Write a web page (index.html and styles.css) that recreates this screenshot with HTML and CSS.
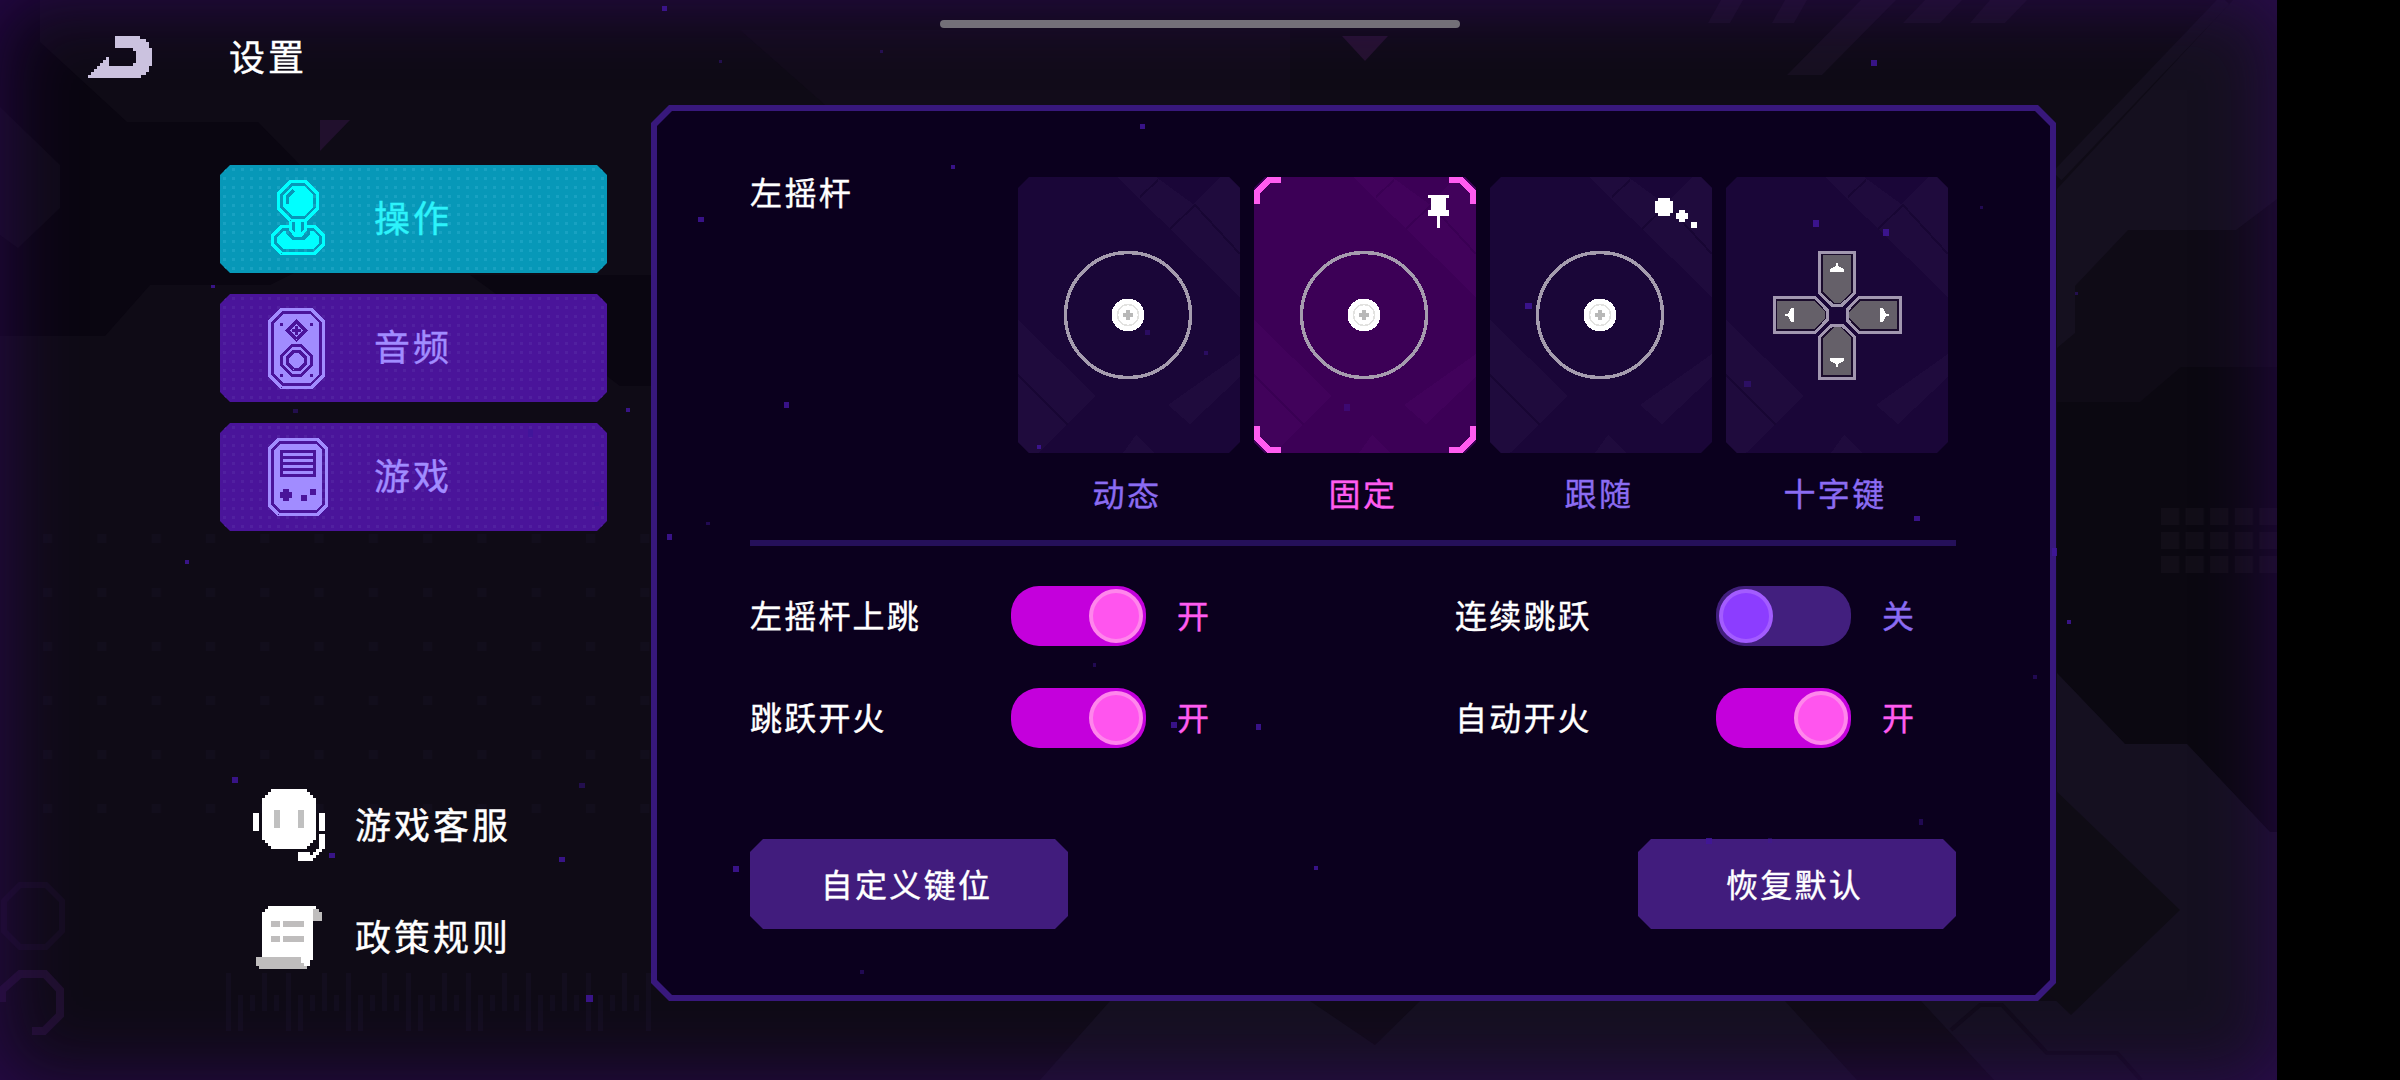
FILE: index.html
```html
<!DOCTYPE html>
<html lang="zh-CN">
<head>
    <meta charset="UTF-8">
    <meta name="viewport" content="width=device-width, initial-scale=1.0">
    <title>设置</title>
    <link rel="stylesheet" href="styles.css">
</head>
<body>
    <div class="screen">
        <!-- Background shapes -->
        <svg class="backdrop" viewBox="0 0 2277 1080">
            <defs>
                <pattern id="dots" x="43" y="534" width="54.3" height="54" patternUnits="userSpaceOnUse">
                    <rect width="9" height="9" fill="#120e1c"/>
                </pattern>
                <pattern id="bars" x="226" y="973" width="60" height="58" patternUnits="userSpaceOnUse">
                    <path d="M0 0h5v58h-5zM12 22h5v36h-5zM24 22h5v16h-5zM36 0h5v38h-5zM48 22h5v16h-5z" fill="#130e1e"/>
                </pattern>
                <pattern id="blocks" x="2161" y="508" width="24.6" height="24" patternUnits="userSpaceOnUse">
                    <rect width="18" height="17" fill="#120e18"/>
                </pattern>
            </defs>
            <path d="M0 0H40V42L127 122H258L300 165V270L270 285H150L105 336H0z" fill="#0a0611"/>
            <path d="M0 107L60 165V208L18 248L0 235z" fill="#0f0b17"/>
            <path d="M470 275H660V386H620L560 340z" fill="#0a0611"/>
            <path d="M320 120H350L320 151z" fill="#21102d"/>
            <path d="M740 30H1290V105H825z" fill="#120c1a"/>
            <path d="M1342 36H1388L1365 61z" fill="#25122f"/>
            <rect x="43" y="534" width="610" height="282" fill="url(#dots)"/>
            <rect x="226" y="973" width="425" height="58" fill="url(#bars)"/>
            <path d="M20 885H46L62 901V931L46 947H20L4 931V901z" fill="none" stroke="#150d20" stroke-width="6"/>
            <path d="M2 1002V990L20 974H45L60 990V1015L44 1031H32" fill="none" stroke="#1f102d" stroke-width="8"/>
            <path d="M1721 0H1743L1730 23H1708zM1785 0H1807L1794 23H1772zM1861 0H1896L1822 75H1787zM1925 0H1962L1940 23H1903zM1990 0H2027L2005 23H1970z" fill="#171020"/>
            <path d="M2233 0H2277V199L2236 230H2128L2075 286V333L2057 348V189z" fill="#15101f"/>
            <path d="M2225 0L2057 176" stroke="#15101f" stroke-width="12"/>
            <path d="M2057 402H2140L2181 367H2277V832H2270L2187 744H2125L2057 673z" fill="#0b0811"/>
            <rect x="2161" y="508" width="116" height="66" fill="url(#blocks)"/>
            <path d="M2057 673L2125 744H2187L2270 832H2277V1080H1040L1110 1001H2057z" fill="#151020"/>
            <path d="M2050 785L2180 910L2071 1015L2050 995z" fill="#0f0c15"/>
            <path d="M1310 1001H1420L1375 1045zM1785 1001H1921L1994 1080H1857z" fill="#100b17"/>
            <path d="M1951 1030L1980 1005H2002L2047 1053H2117L2141 1080" fill="none" stroke="#110b1a" stroke-width="4"/>
        </svg>
        <div class="glow"></div>

        <header class="topbar">
            <svg class="back" width="64" height="42" viewBox="88 36 64 42">
                <path d="M115 36H140V39H146V42H149V48H152V66H149V72H146V75H141V78H88V75H91V72H94V69H97V66H100V63H103V60H106V57H109V66H133V63H136V51H133V48H115z" fill="#cbc2df"/>
            </svg>
            <h1>设置</h1>
        </header>
        <div class="drag-bar"></div>

        <main class="content">
            <aside class="sidebar">
                <nav class="tabs">
                    <a class="tab active">
                        <!-- joystick -->
                        <svg class="tab-icon" width="60" height="78" viewBox="-1 0 20 26">
                            <g fill="none" stroke="currentColor">
                                <path d="M6.500.5H11.500L15.500 4.500V9.500L11.500 13.500H6.500L2.500 9.500V4.500z"/>
                                <path d="M6.500 13.500V16.500L8 18.500H10L11.500 16.500V13.500M6.500 15.500H3.500L.5 18.500V21.500L3.500 24.500H14.500L17.500 21.500V18.500L14.500 15.500H11.500"/>
                            </g>
                            <path d="M7 2H11L14 5V9L11 12H7L4 9V5z" fill="currentColor"/>
                            <path d="M2 19L4 17H5V18L7 20H11L13 18V17H14L16 19V21L14 23H4L2 21zM8 13H10V18H8z" fill="currentColor"/>
                            <path d="M5.500 8V5.500L7.500 3.500" fill="none" stroke="#0798b8"/>
                        </svg>
                        <span>操作</span>
                    </a>
                    <a class="tab">
                        <!-- speaker -->
                        <svg class="tab-icon" width="60" height="81" viewBox="0 0 20 27">
                            <path d="M4.500.5H14.500L18.500 4.500V22.500L14.500 26.500H4.500L.5 22.500V4.500z" fill="none" stroke="currentColor"/>
                            <path d="M5 2H14L17 5V22L14 25H5L2 22V5z" fill="currentColor"/>
                            <g fill="none" stroke="#4a149a">
                                <path d="M9.500 4.500L12.500 7.500L9.500 10.500L6.500 7.500z"/>
                                <path d="M8 7.500H11M9.500 6V9"/>
                                <path d="M8 12.500H11L14.500 16V19L11 22.500H8L4.500 19V16z"/>
                                <path d="M8.500 14.500H10.500L12.500 16.500V18.500L10.500 20.500H8.500L6.500 18.500V16.500z"/>
                            </g>
                            <path d="M4 5h1v1h-1zM14 5h1v1h-1zM4 22h1v1h-1zM14 22h1v1h-1z" fill="#4a149a"/>
                        </svg>
                        <span>音频</span>
                    </a>
                    <a class="tab">
                        <!-- handheld console -->
                        <svg class="tab-icon" width="60" height="78" viewBox="0 0 20 26">
                            <path d="M3.500.5H16.500L19.500 3.500V22.500L16.500 25.500H3.500L.5 22.500V3.500z" fill="none" stroke="currentColor"/>
                            <path d="M4 2H16L18 4V22L16 24H4L2 22V4z" fill="currentColor"/>
                            <path d="M4 4H16V13H4zM5 17H7V18H8V20H7V21H5V20H4V18H5zM11 19h2v2h-2zM14 17h2v2h-2z" fill="#4a149a"/>
                            <path d="M5 5h10v1H5zM5 7h10v1H5zM5 9h10v1H5zM5 11h10v1H5z" fill="currentColor"/>
                        </svg>
                        <span>游戏</span>
                    </a>
                </nav>

                <div class="links">
                    <a class="link">
                        <svg width="72" height="72" viewBox="0 0 24 24">
                            <path d="M6 0H18V1H19V2H20V3H21V17H20V18H19V19H18V20H6V19H5V18H4V17H3V3H4V2H5V1H6z" fill="#fff"/>
                            <path d="M0 8h2v6H0zM22 8h2v6h-2zM22 15H24V20H23V21H22V22H21V23H20V24H15V21H19V22H20V21H21V20H22z" fill="#fff"/>
                            <path d="M7 7h2v6H7zM15 7h2v6h-2z" fill="#c0c0c0"/>
                        </svg>
                        <span>游戏客服</span>
                    </a>
                    <a class="link">
                        <svg width="72" height="63" viewBox="-1 0 24 21">
                            <path d="M4 0H20V1H21V5H19V18H18V20H16V19H15V17H2V2H3V1H4z" fill="#fff"/>
                            <path d="M19 1H21V2H22V5H19zM0 17H15V19H16V20H17V21H1V20H0zM5 5h3v2H5zM9 5h7v2H9zM5 10h3v2H5zM9 10h7v2H9z" fill="#bfbdbd"/>
                        </svg>
                        <span>政策规则</span>
                    </a>
                </div>
            </aside>

            <section class="panel">
                <div class="panel-inner">
                    <div class="stick">
                        <h2>左摇杆</h2>
                        <div class="cards">
                            <div class="option">
                                <div class="card">
                                    <svg viewBox="0 0 222 276">
                                        <defs>
                                            <g id="deco">
                                                <path class="deco-fill" d="M99 0H138L175 27L202 0H222V120zM0 143L78 219L20 276H0zM222 177L150 228L172 247L222 200zM105 276L118 258L136 276z"/>
                                                <path class="deco-line" d="M122 20L140 3M152 52L177 28L222 77M0 198L50 248"/>
                                            </g>
                                            <g id="pad">
                                                <circle cx="110" cy="138" r="62.500" fill="none" stroke="#a59cae" stroke-width="3.500"/>
                                                <circle cx="110" cy="138" r="16.500" fill="#fff"/>
                                                <circle cx="110" cy="138" r="10.500" fill="none" stroke="#e2e2e0" stroke-width="1.500"/>
                                                <path d="M108 133h4v3h3v4h-3v3h-4v-3h-3v-4h3z" fill="#b8b8b8"/>
                                            </g>
                                        </defs>
                                        <use href="#deco"/>
                                        <use href="#pad"/>
                                    </svg>
                                </div>
                                <span>动态</span>
                            </div>
                            <div class="option selected">
                                <div class="card">
                                    <svg viewBox="0 0 222 276">
                                        <use href="#deco"/>
                                        <use href="#pad"/>
                                        <path d="M3 27V15L15 3H27M195 3H207L219 15V27M219 249V261L207 273H195M27 273H15L3 261V249" fill="none" stroke="#ff5cf0" stroke-width="6"/>
                                        <path d="M174 18H195V21H192V33H195V39H186V51H183V39H174V33H177V21H174z" fill="#fff"/>
                                    </svg>
                                </div>
                                <span>固定</span>
                            </div>
                            <div class="option">
                                <div class="card">
                                    <svg viewBox="0 0 222 276">
                                        <use href="#deco"/>
                                        <use href="#pad"/>
                                        <path d="M168 21H180V24H183V36H180V39H168V36H165V24H168zM189 33H195V36H198V42H195V45H189V42H186V36H189zM201 45h6v6h-6z" fill="#fff"/>
                                    </svg>
                                </div>
                                <span>跟随</span>
                            </div>
                            <div class="option">
                                <div class="card">
                                    <svg viewBox="0 0 222 276">
                                        <defs>
                                            <g id="arm">
                                                <path d="M-17.500-63H17.500V-22L5-10H-5L-17.500-22z" fill="#1a0b2c" stroke="#a297b0" stroke-width="3"/>
                                                <path d="M-14-60H14V-23L3-12H-3L-14-23z" fill="#656069"/>
                                                <path d="M-1-52H1V-49L7-46V-43H-7V-46L-1-49z" fill="#fff"/>
                                            </g>
                                        </defs>
                                        <use href="#deco"/>
                                        <g transform="translate(111 138)">
                                            <use href="#arm"/>
                                            <use href="#arm" transform="rotate(90)"/>
                                            <use href="#arm" transform="rotate(180)"/>
                                            <use href="#arm" transform="rotate(270)"/>
                                        </g>
                                    </svg>
                                </div>
                                <span>十字键</span>
                            </div>
                        </div>
                    </div>

                    <div class="switches">
                        <div class="row">
                            <label>左摇杆上跳</label>
                            <div class="switch on"><i></i></div>
                            <span class="state on">开</span>
                        </div>
                        <div class="row">
                            <label>连续跳跃</label>
                            <div class="switch"><i></i></div>
                            <span class="state">关</span>
                        </div>
                        <div class="row">
                            <label>跳跃开火</label>
                            <div class="switch on"><i></i></div>
                            <span class="state on">开</span>
                        </div>
                        <div class="row">
                            <label>自动开火</label>
                            <div class="switch on"><i></i></div>
                            <span class="state on">开</span>
                        </div>
                    </div>

                    <div class="actions">
                        <button type="button">自定义键位</button>
                        <button type="button">恢复默认</button>
                    </div>
                </div>
            </section>
        </main>

        <!-- Floating sparks -->
        <svg class="sparks" viewBox="0 0 2277 1080">
            <path d="M211 285h4v3h-4zM626 408h4v4h-4zM528 429h5v8h-5zM185 560h4v4h-4zM232 777h6v6h-6zM329 853h6v5h-6zM559 857h6v5h-6zM586 995h7v7h-7zM667 534h5v6h-5zM698 217h6v5h-6zM784 402h5v6h-5zM951 165h4v4h-4zM1037 445h4v4h-4zM1525 303h7v6h-7zM1813 220h6v7h-6zM1883 229h6v7h-6zM1914 516h6v5h-6zM1871 60h6v6h-6zM1140 124h5v5h-5zM1171 722h6v6h-6zM1256 724h5v6h-5zM733 866h6v6h-6zM1706 838h6v6h-6zM1314 866h4v4h-4zM2067 620h4v4h-4zM2052 548h5v8h-5zM662 6h5v5h-5z"/>
            <path class="faint" d="M293 409h5v4h-5zM594 502h5v4h-5zM579 783h6v5h-6zM1204 351h4v4h-4zM1744 381h7v6h-7zM1567 615h5v5h-5zM1093 663h3v4h-3zM1768 838h4v5h-4zM1919 819h4v6h-4zM860 970h4v4h-4zM2033 675h4v4h-4zM1980 206h3v3h-3zM2075 292h3v3h-3zM1344 404h6v7h-6zM1145 330h5v5h-5zM706 522h4v3h-4zM719 60h3v3h-3zM880 50h3v3h-3z"/>
        </svg>
    </div>
</body>
</html>
```
FILE: styles.css
```css
/* Reset */
body, h1, h2, button {
    margin: 0;
    padding: 0;
    box-sizing: border-box;
    font-family: "Noto Sans CJK SC", "Noto Sans", sans-serif;
    font-weight: 400;
}

body {
    width: 2400px;
    height: 1080px;
    overflow: hidden;
    background: #000;
    color: #fff;
    line-height: 1;
    -webkit-text-stroke: 0.4px currentColor;
}

svg {
    display: block;
    flex: none;
    shape-rendering: crispEdges;
}

.screen {
    position: relative;
    width: 2277px;
    height: 1080px;
    background: #0f0b16;
    overflow: hidden;
}

.backdrop, .glow, .sparks {
    position: absolute;
    left: 0;
    top: 0;
    width: 2277px;
    height: 1080px;
    pointer-events: none;
}

.backdrop {
    shape-rendering: auto;
}

.glow {
    box-shadow: inset 0 0 76px rgba(58, 8, 112, 0.62);
}

.sparks {
    fill: #40169a;
    opacity: 0.85;
}

.sparks .faint {
    opacity: 0.5;
}

/* Header */
.topbar {
    position: relative;
    display: flex;
    align-items: flex-start;
    gap: 77px;
    height: 105px;
    padding: 36px 0 0 88px;
    box-sizing: border-box;
}

.topbar h1 {
    padding-top: 1px;
    font-size: 36px;
    line-height: 36px;
    letter-spacing: 3px;
}

.drag-bar {
    position: absolute;
    left: 940px;
    top: 20px;
    width: 520px;
    height: 8px;
    border-radius: 4px;
    background: #737078;
}

.content {
    position: relative;
    display: flex;
    height: 975px;
}

/* Sidebar */
.sidebar {
    width: 651px;
    padding: 60px 44px 0 220px;
    box-sizing: border-box;
}

.tabs {
    display: flex;
    flex-direction: column;
    gap: 21px;
}

.tab {
    display: flex;
    align-items: center;
    gap: 46px;
    height: 108px;
    padding-left: 48px;
    background-color: #4a149a;
    background-image: radial-gradient(circle, #5120a0 1.5px, transparent 2px);
    background-size: 9px 9px;
    color: #a18cff;
    font-size: 36px;
    letter-spacing: 3px;
    clip-path: polygon(10px 0, calc(100% - 10px) 0, 100% 10px, 100% calc(100% - 10px), calc(100% - 10px) 100%, 10px 100%, 0 calc(100% - 10px), 0 10px);
}

.tab.active {
    background-color: #0798b8;
    background-image: radial-gradient(circle, #18a2c2 1.5px, transparent 2px);
    color: #00ffff;
}

.tab span {
    padding-bottom: 7px;
}

.tab.active span {
    color: #2cf3fb;
}

.links {
    display: flex;
    flex-direction: column;
    gap: 45px;
    padding: 258px 0 0 33px;
}

.link {
    display: flex;
    align-items: center;
    gap: 30px;
    font-size: 36px;
    letter-spacing: 3px;
}

.link span {
    padding-bottom: 5px;
}

/* Panel with cut corners */
.panel {
    width: 1405px;
    height: 896px;
    padding: 6px;
    box-sizing: border-box;
    background: #38187c;
    clip-path: polygon(18px 0, calc(100% - 18px) 0, 100% 18px, 100% calc(100% - 18px), calc(100% - 18px) 100%, 18px 100%, 0 calc(100% - 18px), 0 18px);
}

.panel-inner {
    height: 100%;
    padding: 66px 94px 0 93px;
    box-sizing: border-box;
    background: #0b001e;
    clip-path: polygon(15px 0, calc(100% - 15px) 0, 100% 15px, 100% calc(100% - 15px), calc(100% - 15px) 100%, 15px 100%, 0 calc(100% - 15px), 0 15px);
}

.stick {
    display: flex;
    justify-content: space-between;
    height: 369px;
    padding-right: 8px;
    box-sizing: border-box;
    border-bottom: 6px solid #25105a;
}

.stick h2 {
    margin-top: -2px;
    font-size: 32px;
    line-height: 32px;
    letter-spacing: 2.4px;
}

.cards {
    display: grid;
    grid-template-columns: repeat(4, 222px);
    gap: 14px;
}

.option {
    --deco: #1f0b3d;
    --deco-line: #180634;
    display: flex;
    flex-direction: column;
    align-items: center;
    gap: 23px;
    color: #8b6cf2;
    font-size: 32px;
    letter-spacing: 2.4px;
}

.option span {
    margin-left: -4px;
}

.card {
    width: 222px;
    height: 276px;
    background: #1a0638;
    clip-path: polygon(11px 0, calc(100% - 11px) 0, 100% 11px, 100% calc(100% - 11px), calc(100% - 11px) 100%, 11px 100%, 0 calc(100% - 11px), 0 11px);
}

.deco-fill {
    fill: var(--deco);
}

.deco-line {
    fill: none;
    stroke: var(--deco-line);
    stroke-width: 2;
}

.option.selected {
    --deco: #41025b;
    --deco-line: #3a0054;
    color: #ff5cf0;
}

.selected .card {
    background: #3c0056;
}

/* Switches */
.switches {
    display: grid;
    grid-template-columns: 705px 500px;
    row-gap: 42px;
    padding-top: 40px;
}

.row {
    display: flex;
    align-items: center;
    height: 60px;
    font-size: 32px;
    letter-spacing: 2.2px;
}

.row label {
    width: 261px;
    padding-bottom: 5px;
}

.switch {
    display: flex;
    width: 135px;
    height: 60px;
    padding: 3px;
    box-sizing: border-box;
    border-radius: 28px;
    background: #421f7e;
}

.switch i {
    width: 54px;
    height: 54px;
    box-sizing: border-box;
    border: 4px solid #a35cff;
    border-radius: 50%;
    background: #8c3dff;
}

.switch.on {
    justify-content: flex-end;
    background: #c400dc;
}

.switch.on i {
    border-color: #ff86ec;
    background: #ff55ee;
}

.state {
    margin-left: 31px;
    padding-bottom: 5px;
    color: #8b6cf2;
}

.state.on {
    color: #ff5cf0;
}

/* Bottom buttons */
.actions {
    display: flex;
    justify-content: space-between;
    padding-top: 91px;
}

.actions button {
    width: 318px;
    height: 90px;
    padding: 0 5px 3px 0;
    border: none;
    background: #411c7d;
    color: #fff;
    font-size: 32px;
    letter-spacing: 2.3px;
    clip-path: polygon(13px 0, calc(100% - 13px) 0, 100% 13px, 100% calc(100% - 13px), calc(100% - 13px) 100%, 13px 100%, 0 calc(100% - 13px), 0 13px);
}
```
